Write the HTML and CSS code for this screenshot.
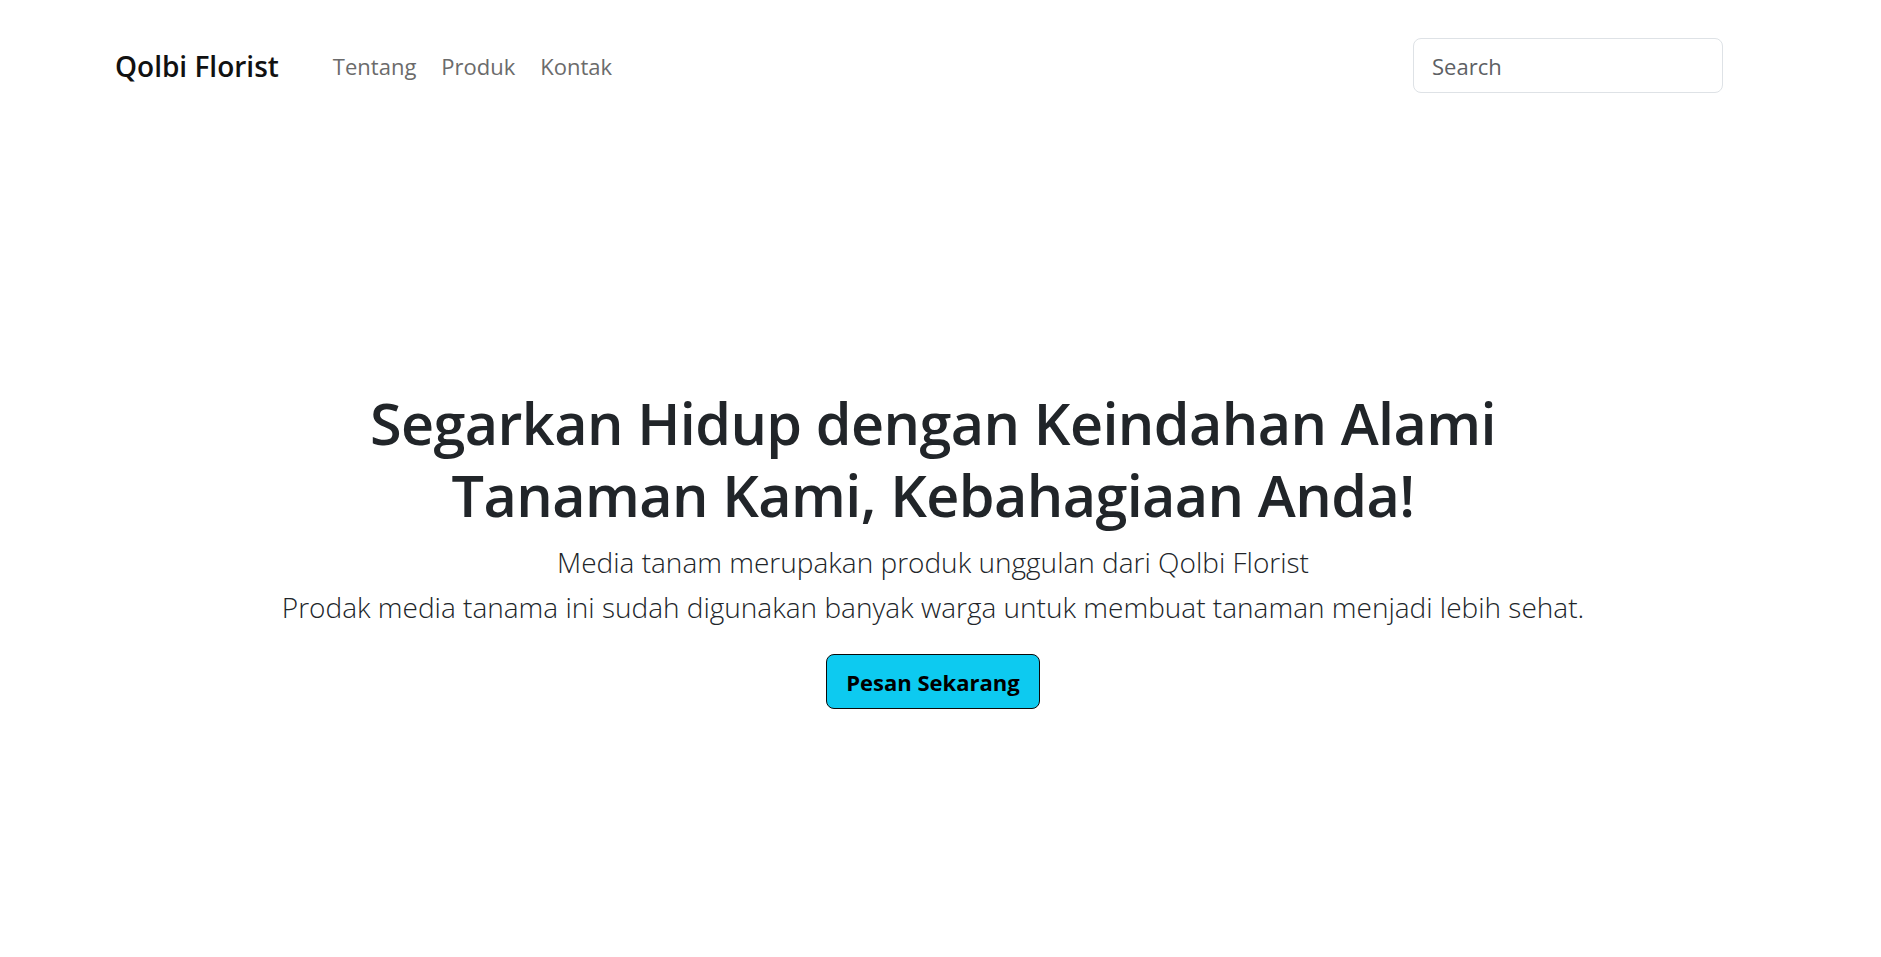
FILE: index.html
```html
<!DOCTYPE html>
<html lang="id">
<head>
<meta charset="utf-8">
<title>Qolbi Florist</title>
<link rel="stylesheet" href="styles.css">
</head>
<body>
<header class="navbar">
  <a class="brand" href="#">Qolbi Florist</a>
  <nav class="nav-links">
    <a href="#">Tentang</a>
    <a href="#">Produk</a>
    <a href="#">Kontak</a>
  </nav>
  <form class="search-form">
    <input class="search-input" type="search" placeholder="Search">
  </form>
</header>
<main class="hero">
  <h1 class="hero-title">Segarkan Hidup dengan Keindahan Alami<br>Tanaman Kami, Kebahagiaan Anda!</h1>
  <p class="hero-lead">Media tanam merupakan produk unggulan dari Qolbi Florist<br>Prodak media tanama ini sudah digunakan banyak warga untuk membuat tanaman menjadi lebih sehat.</p>
  <button class="btn-order" type="button">Pesan Sekarang</button>
</main>
</body>
</html>
```
FILE: styles.css
```css
* { box-sizing: border-box; }
html, body { margin: 0; padding: 0; background: #fff; }
body {
  font-family: "Open Sans", "Noto Sans", sans-serif;
  color: #212529;
  font-size: 19px;
}
.navbar {
  display: flex;
  align-items: center;
  padding: 38px 158px 38px 115px;
}
.brand {
  font-size: 28px;
  font-weight: 600;
  color: #111;
  text-decoration: none;
  margin-right: 54px;
}
.nav-links {
  display: flex;
  gap: 25px;
}
.nav-links a {
  color: #6b6b6b;
  text-decoration: none;
  font-size: 22px;
}
.search-form {
  margin-left: auto;
  display: flex;
}
.search-input {
  width: 310px;
  height: 55px;
  border: 1px solid #dee2e6;
  border-radius: 8px;
  padding: 0 18px;
  font-family: inherit;
  font-size: 22px;
  color: #212529;
  outline: none;
}
.search-input::placeholder { color: #5d6064; }
.hero {
  padding: 256px 15px 0 0;
  text-align: center;
}
.hero-title {
  margin: 0;
  font-size: 57.5px;
  line-height: 72px;
  font-weight: 600;
  letter-spacing: -0.6px;
  color: #212529;
}
.hero-lead {
  margin: 9px 0 0;
  font-size: 28px;
  line-height: 45px;
  font-weight: 300;
  color: #212529;
}
.btn-order {
  margin-top: 24px;
  background: #0dcaf0;
  border: 1px solid #0a0a0a;
  border-radius: 8px;
  padding: 0 19px;
  height: 55px;
  font-family: inherit;
  font-size: 22px;
  font-weight: 700;
  color: #000;
  cursor: pointer;
}
```
